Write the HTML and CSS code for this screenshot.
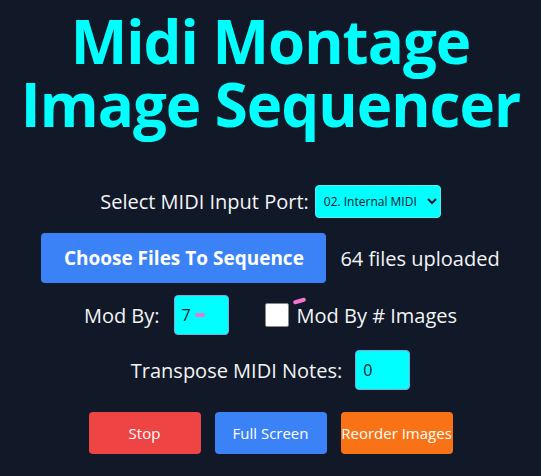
FILE: index.html
```html
<!DOCTYPE html>
<html>
  <head>
    <title>Midi Montage Image Sequencer</title>
    <link rel="stylesheet" href="styles.css">
  </head>
  <body>
    <div class="app">
      <h1 class="title">
        <span class="title-line">Midi Montage</span>
        <span class="title-line">Image Sequencer</span>
      </h1>

      <div class="row port-row">
        <label for="midiPort">Select MIDI Input Port:</label>
        <select id="midiPort" class="port-select">
          <option>02. Internal MIDI</option>
        </select>
      </div>

      <div class="row files-row">
        <button class="btn btn-blue btn-big" type="button">Choose Files To Sequence</button>
        <span class="files-count">64 files uploaded</span>
      </div>

      <div class="row mod-row">
        <label for="modBy">Mod By:</label>
        <div class="num-box">
          <span class="num-value">7</span>
          <span class="pink-dash"></span>
        </div>
        <label class="check-label">
          <span class="check-box"></span>
          <span class="pink-tick"></span>
          Mod By # Images
        </label>
      </div>

      <div class="row transpose-row">
        <label for="transpose">Transpose MIDI Notes:</label>
        <div class="num-box">
          <span class="num-value">0</span>
        </div>
      </div>

      <div class="row action-row">
        <button class="btn btn-red" type="button">Stop</button>
        <button class="btn btn-blue" type="button">Full Screen</button>
        <button class="btn btn-orange" type="button">Reorder Images</button>
      </div>
    </div>
  </body>
</html>
```

FILE: styles.css
```css
body {
  margin: 0;
  background: #111827;
  color: #f3f4f6;
  font-family: "Open Sans", "Noto Sans", Arial, sans-serif;
}

.app {
  display: flex;
  flex-direction: column;
  align-items: center;
  padding-top: 10px;
}

.title {
  margin: 0 0 49px;
  color: #00ffff;
  font-size: 60px;
  line-height: 63px;
  font-weight: 700;
  text-align: center;
  letter-spacing: -1px;
}

.title-line {
  display: block;
}

.row {
  display: flex;
  align-items: center;
  justify-content: center;
  font-size: 20px;
}

.port-row {
  gap: 6px;
  margin-bottom: 15px;
}

.port-select {
  width: 126px;
  height: 33px;
  background: #00ffff;
  color: #111827;
  border: 1px solid #5ee;
  border-radius: 4px;
  font-family: inherit;
  font-size: 12px;
  padding: 0 4px;
}

.files-row {
  gap: 14px;
  margin-bottom: 12px;
}

.btn {
  width: 112px;
  height: 42px;
  border: none;
  border-radius: 4px;
  color: #fff;
  font-family: inherit;
  font-size: 15px;
  padding: 0;
  cursor: pointer;
}

.btn-big {
  width: 285px;
  height: 50px;
  font-size: 19px;
  font-weight: 700;
}

.btn-blue {
  background: #3b82f6;
}

.btn-red {
  background: #ef4444;
}

.btn-orange {
  background: #f97316;
}

.mod-row {
  margin-bottom: 15px;
}

.num-box {
  position: relative;
  width: 55px;
  height: 40px;
  box-sizing: border-box;
  background: #00ffff;
  border: 1px solid #7ad;
  border-radius: 4px;
  color: #111827;
  font-size: 16px;
  display: flex;
  align-items: center;
  padding-left: 7px;
}

.mod-row .num-box {
  margin-left: 14px;
}

.pink-dash {
  width: 10px;
  height: 4px;
  border-radius: 2px;
  background: #f472d0;
  margin-left: 4px;
}

.check-label {
  position: relative;
  display: flex;
  align-items: center;
  gap: 8px;
  margin-left: 36px;
}

.check-box {
  width: 24px;
  height: 24px;
  background: #fff;
  border: 1px solid #888;
  box-sizing: border-box;
  border-radius: 2px;
}

.pink-tick {
  position: absolute;
  left: 28px;
  top: -3px;
  width: 13px;
  height: 4px;
  border-radius: 2px;
  background: #f472d0;
  transform: rotate(-16deg);
}

.transpose-row {
  gap: 13px;
  margin-bottom: 22px;
}

.action-row {
  gap: 14px;
}
```
